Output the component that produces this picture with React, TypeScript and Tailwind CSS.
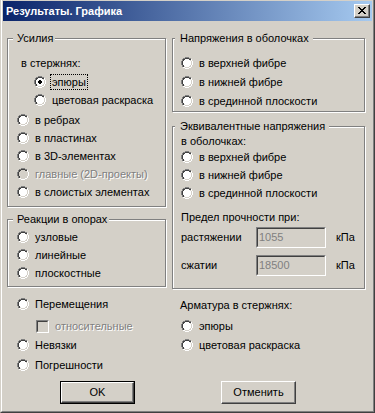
import React from "react";

type Px = [number, number[]];

const OUTER: Px[] = [
  [0, [4, 5, 6, 7]],
  [1, [2, 3, 8, 9]],
  [2, [1, 10]],
  [3, [1, 10]],
  [4, [0, 11]],
  [5, [0, 11]],
  [6, [0, 11]],
  [7, [0, 11]],
  [8, [1, 10]],
  [9, [1, 10]],
  [10, [2, 3, 8, 9]],
  [11, [4, 5, 6, 7]],
];
const INNER: Px[] = [
  [1, [4, 5, 6, 7]],
  [2, [2, 3, 8, 9]],
  [3, [2, 9]],
  [4, [1, 10]],
  [5, [1, 10]],
  [6, [1, 10]],
  [7, [1, 10]],
  [8, [2, 9]],
  [9, [2, 3, 8, 9]],
  [10, [4, 5, 6, 7]],
];
const FILL: [number, number, number][] = [
  [2, 4, 4],
  [3, 3, 6],
  [4, 2, 8],
  [5, 2, 8],
  [6, 2, 8],
  [7, 2, 8],
  [8, 3, 6],
  [9, 4, 4],
];
const DOT: [number, number, number][] = [
  [4, 5, 2],
  [5, 4, 4],
  [6, 4, 4],
  [7, 5, 2],
];

function RadioIcon({ checked, disabled }: { checked?: boolean; disabled?: boolean }) {
  const rects: React.ReactNode[] = [];
  FILL.forEach(([r, c, w]) =>
    rects.push(<rect key={`f${r}`} x={c} y={r} width={w} height={1} fill={disabled ? "#d4d0c8" : "#ffffff"} />)
  );
  OUTER.forEach(([r, cols]) =>
    cols.forEach((c) =>
      rects.push(<rect key={`o${r}-${c}`} x={c} y={r} width={1} height={1} fill={r + c <= 11 ? "#808080" : "#ffffff"} />)
    )
  );
  INNER.forEach(([r, cols]) =>
    cols.forEach((c) =>
      rects.push(<rect key={`i${r}-${c}`} x={c} y={r} width={1} height={1} fill={r + c <= 11 ? "#404040" : "#d4d0c8"} />)
    )
  );
  if (checked)
    DOT.forEach(([r, c, w]) => rects.push(<rect key={`d${r}`} x={c} y={r} width={w} height={1} fill="#000000" />));
  return (
    <svg width="12" height="12" viewBox="0 0 12 12" shapeRendering="crispEdges" className="shrink-0 block">
      {rects}
    </svg>
  );
}

function Radio({
  label,
  checked,
  disabled,
  focused,
  tall,
  className,
}: {
  label: string;
  checked?: boolean;
  disabled?: boolean;
  focused?: boolean;
  tall?: boolean;
  className?: string;
}) {
  return (
    <div className={(tall ? "h-[19px] " : "h-[18px] ") + "flex items-center " + (className ?? "")}>
      <RadioIcon checked={checked} disabled={disabled} />
      <span
        className={
          "ml-[4px] px-[1px] border leading-[14px] whitespace-nowrap " +
          (focused ? "border-dotted border-black " : "border-transparent ") +
          (disabled ? "text-[#808080] [text-shadow:1px_1px_0_#ffffff]" : "")
        }
      >
        {label}
      </span>
    </div>
  );
}

function Group({
  title,
  right,
  className,
  children,
}: {
  title: string;
  right?: boolean;
  className?: string;
  children: React.ReactNode;
}) {
  return (
    <div
      className={
        "relative border border-[#808080] shadow-[inset_1px_1px_0_#ffffff,1px_1px_0_#ffffff] " + (className ?? "")
      }
    >
      <span
        className={
          "absolute top-[-7px] bg-[#d4d0c8] leading-[13px] whitespace-nowrap " +
          (right ? "left-[2px] pl-[5px] pr-[4px]" : "left-[5px] pl-[4px] pr-[2px]")
        }
      >
        {title}
      </span>
      {children}
    </div>
  );
}

function Field({ value }: { value: string }) {
  return (
    <div className="w-[70px] h-[21px] border border-t-[#808080] border-l-[#808080] border-r-white border-b-white">
      <div className="h-full border border-t-[#404040] border-l-[#404040] border-r-[#d4d0c8] border-b-[#d4d0c8] bg-[#d4d0c8] pl-[1px] pt-[2px] leading-[13px] text-[#808080]">
        {value}
      </div>
    </div>
  );
}

function CloseGlyph() {
  const rects: React.ReactNode[] = [];
  for (let r = 0; r < 7; r++) {
    rects.push(<rect key={`a${r}`} x={r} y={r} width={2} height={1} fill="#000" />);
    rects.push(<rect key={`b${r}`} x={6 - r} y={r} width={2} height={1} fill="#000" />);
  }
  return (
    <svg width="8" height="7" viewBox="0 0 8 7" shapeRendering="crispEdges" className="block">
      {rects}
    </svg>
  );
}

export default function App() {
  return (
    <div className="w-[375px] h-[413px] bg-[#d4d0c8] border-l border-r border-b border-l-[#d4d0c8] border-r-[#404040] border-b-[#404040] text-[11px] leading-[13px] text-black [font-family:'Liberation_Sans',Arial,sans-serif] overflow-hidden select-none">
      <div className="h-full border-l border-r border-b border-l-white border-r-[#808080] border-b-[#808080] p-[1px] flex flex-col">
        {/* Title bar */}
        <div className="h-[20px] shrink-0 flex items-center justify-between bg-[linear-gradient(to_right,#0a246a,#a6caf0)] pl-[3px] pr-[2px]">
          <span className="font-bold text-white leading-[13px]">Результаты. Графика</span>
          <div className="w-[16px] h-[14px] border border-t-white border-l-white border-r-[#404040] border-b-[#404040] bg-[#d4d0c8] shadow-[inset_-1px_-1px_0_#808080] pl-[3px] pt-[2px]">
            <CloseGlyph />
          </div>
        </div>

        {/* Top section */}
        <div className="flex items-start pt-[17px] pl-[4px]">
          {/* Left column */}
          <div className="w-[160px] flex flex-col">
            <Group title="Усилия" className="w-[159px] pt-[15px] pb-[5px] pl-[9px]">
              <div className="h-[18px] flex items-center pl-[4px]">в стержнях:</div>
              <Radio label="эпюры" checked focused className="ml-[17px] mt-[1px]" />
              <Radio label="цветовая раскраска" className="ml-[17px]" />
              <Radio label="в ребрах" className="mt-[2px]" />
              <Radio label="в пластинах" />
              <Radio label="в 3D-элементах" />
              <Radio label="главные (2D-проекты)" disabled />
              <Radio label="в слоистых элементах" />
            </Group>
            <Group title="Реакции в опорах" className="w-[159px] mt-[12px] pt-[8px] pb-[4px] pl-[9px]">
              <Radio label="узловые" />
              <Radio label="линейные" />
              <Radio label="плоскостные" />
            </Group>
          </div>

          {/* Right column */}
          <div className="w-[194px] ml-[5px] flex flex-col">
            <Group title="Напряжения в оболочках" right className="w-[193px] pt-[14px] pb-[1px] pl-[8px]">
              <Radio label="в верхней фибре" tall />
              <Radio label="в нижней фибре" tall />
              <Radio label="в срединной плоскости" tall />
            </Group>
            <Group title="Эквивалентные напряжения" right className="w-[193px] mt-[14px] pt-[8px] pb-[12px] pl-[8px]">
              <div className="h-[13px] flex items-center">в оболочках:</div>
              <Radio label="в верхней фибре" />
              <Radio label="в нижней фибре" />
              <Radio label="в срединной плоскости" />
              <div className="h-[18px] mt-[6px] flex items-center">Предел прочности при:</div>
              <div className="h-[21px] mt-[1px] flex items-center">
                <span className="w-[75px]">растяжении</span>
                <Field value="1055" />
                <span className="ml-[10px]">кПа</span>
              </div>
              <div className="h-[21px] mt-[7px] flex items-center">
                <span className="w-[75px]">сжатии</span>
                <Field value="18500" />
                <span className="ml-[10px]">кПа</span>
              </div>
            </Group>
          </div>
        </div>

        {/* Bottom options */}
        <div className="flex items-start">
          <div className="w-[169px] pl-[14px] flex flex-col">
            <Radio label="Перемещения" className="mt-[6px]" />
            <div className="h-[18px] mt-[4px] ml-[19px] flex items-center">
              <div className="w-[13px] h-[13px] shrink-0 border border-t-[#808080] border-l-[#808080] border-r-white border-b-white">
                <div className="h-full border border-t-[#404040] border-l-[#404040] border-r-[#d4d0c8] border-b-[#d4d0c8] bg-[#d4d0c8]" />
              </div>
              <span className="ml-[6px] text-[#808080] [text-shadow:1px_1px_0_#ffffff]">относительные</span>
            </div>
            <Radio label="Невязки" className="mt-[1px]" />
            <Radio label="Погрешности" className="mt-[2px]" />
          </div>
          <div className="pl-[8px] flex flex-col">
            <div className="h-[18px] mt-[7px] flex items-center">Арматура в стержнях:</div>
            <Radio label="эпюры" className="mt-[3px] ml-[1px]" />
            <Radio label="цветовая раскраска" className="mt-[1px] ml-[1px]" />
          </div>
        </div>

        {/* Buttons */}
        <div className="flex mt-[7px]">
          <div className="ml-[57px] w-[75px] h-[23px] border border-black">
            <div className="h-full border border-t-white border-l-white border-r-[#404040] border-b-[#404040] shadow-[inset_-1px_-1px_0_#808080] flex items-center justify-center">
              OK
            </div>
          </div>
          <div className="ml-[86px] w-[75px] h-[23px] border border-t-white border-l-white border-r-[#404040] border-b-[#404040] shadow-[inset_-1px_-1px_0_#808080] flex items-center justify-center">
            Отменить
          </div>
        </div>
      </div>
    </div>
  );
}
